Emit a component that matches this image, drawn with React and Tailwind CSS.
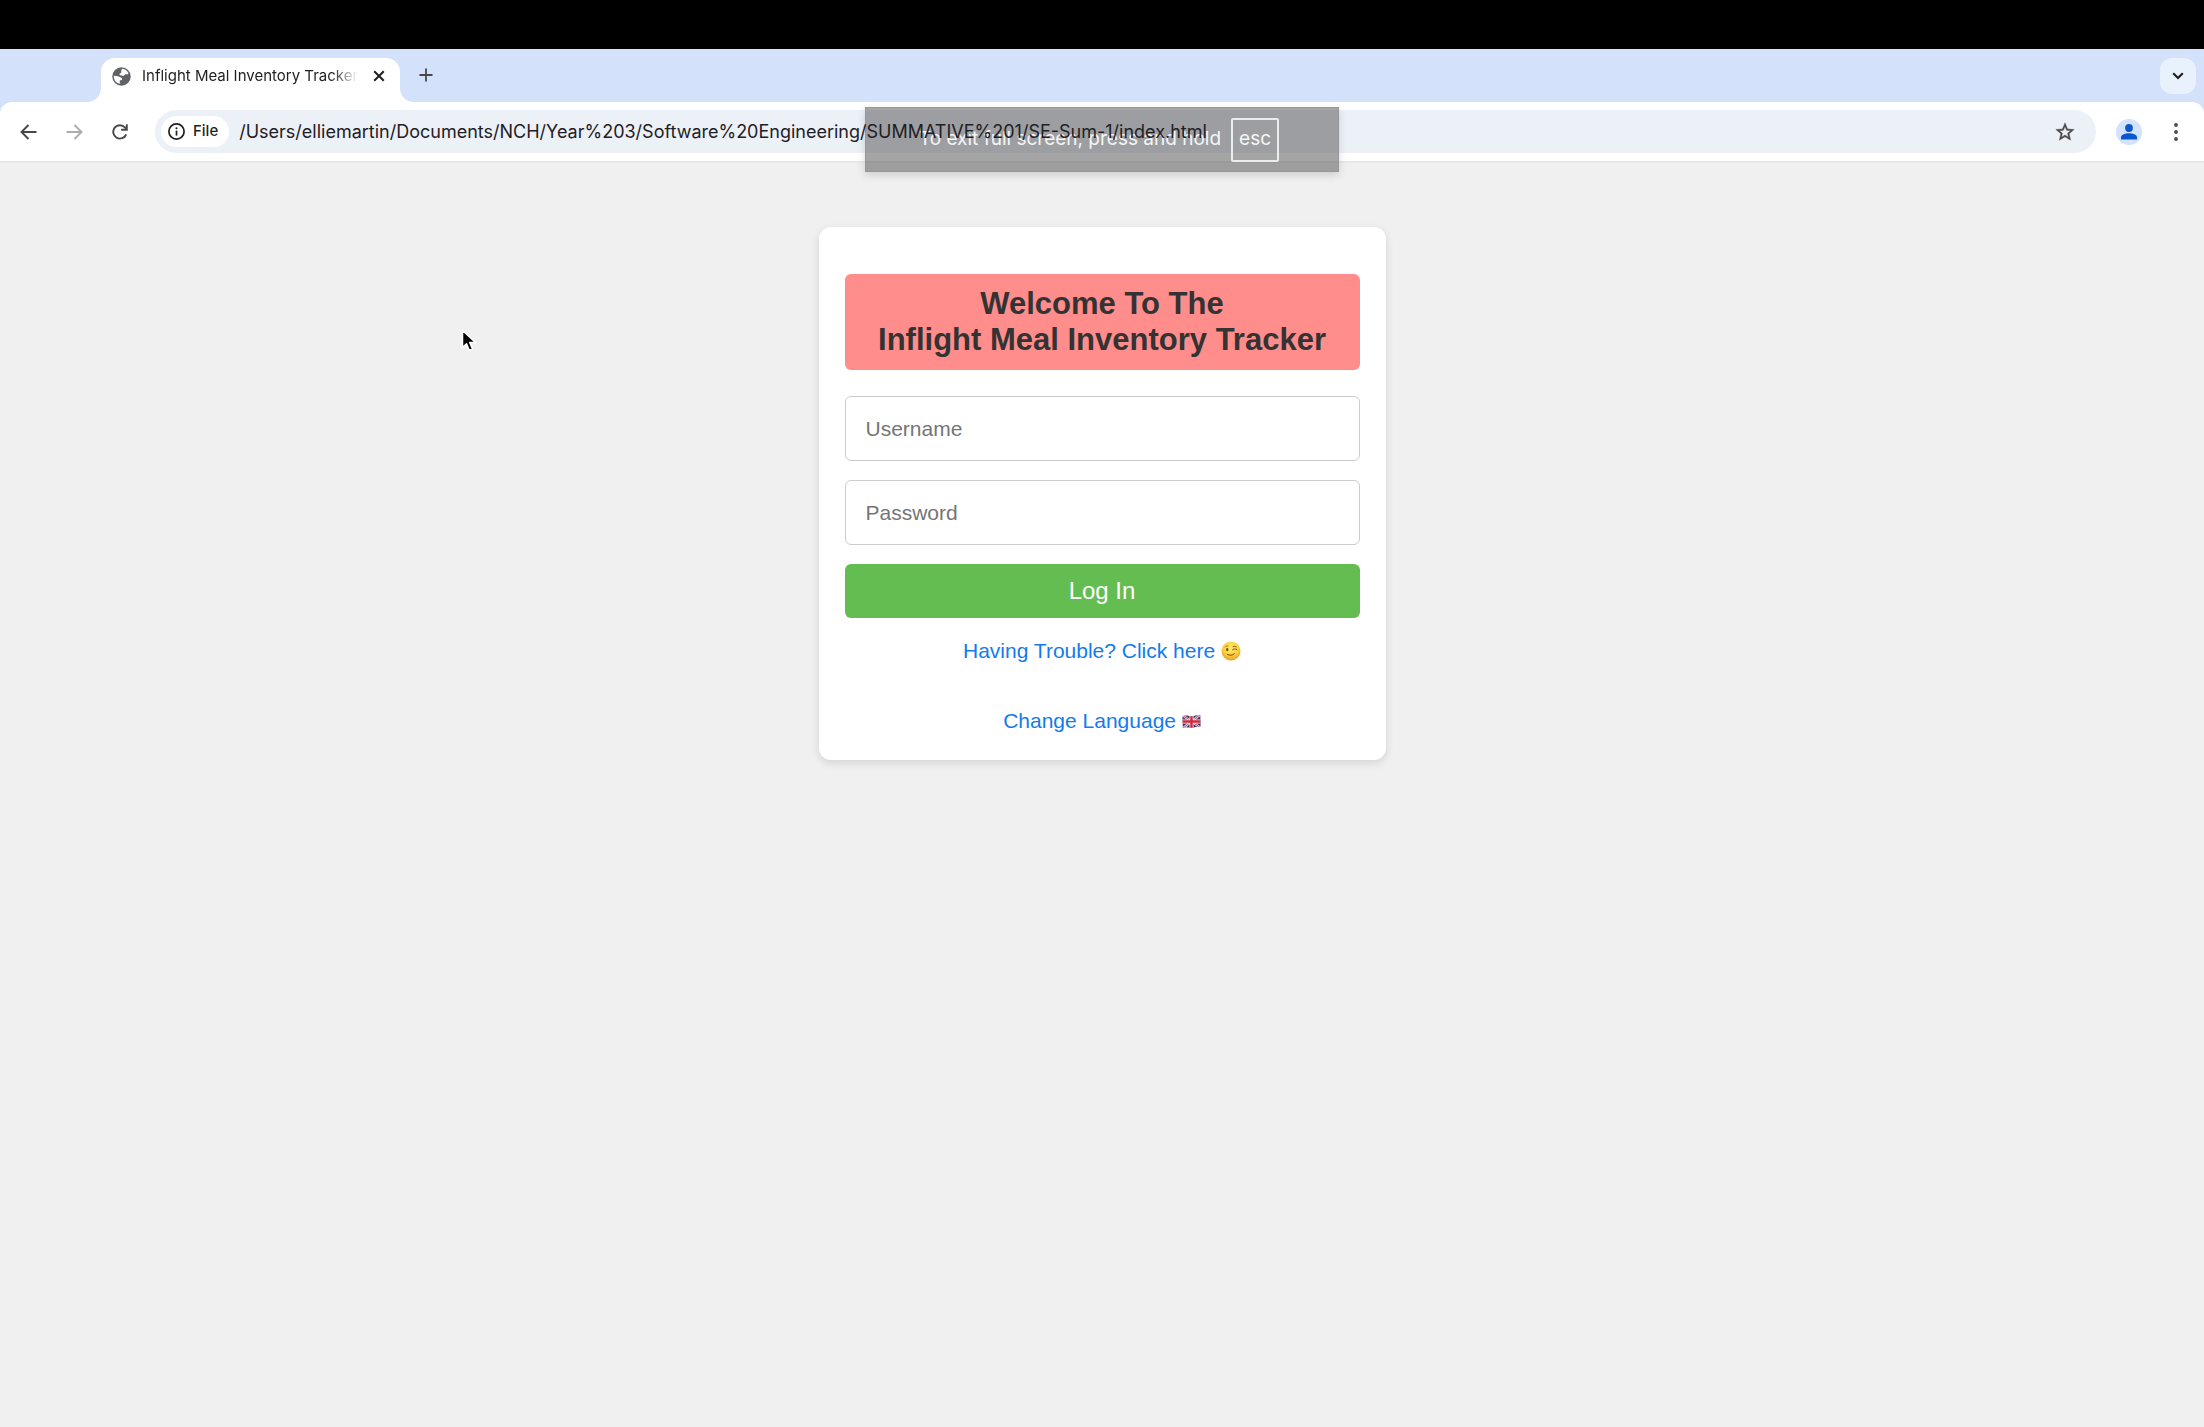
import React from "react";

const ICON = "block shrink-0";

function Globe() {
  return (
    <svg className={ICON} width="19" height="19" viewBox="0 0 20 20">
      <circle cx="10" cy="10" r="9.7" fill="#5f6368" />
      <path
        d="M10.800 1.900c3.200.3 5.600 2.300 6.700 5.100-1 .4-1.800.9-2.900.7-1.200-.2-1.300 1.300-2.500 1.500-1.600.2-2.500-.9-3.900-.5-.6-.9-.2-1.700.7-2 .9-.3.7-1 .8-1.700.1-.9.100-2.400 1.100-3.100z"
        fill="#fff"
      />
      <path
        d="M1.900 9.300c2.200.3 3.900.1 5.600.9 1.500.8 2.600.9 3.100 2.100.4 1.200-.8 1.600-1.900 1.700-.8.1-.6 1.300-.6 2.100 0 .6.300 1.100.9 1.700C4.700 17.500 1.700 14.200 1.900 9.300z"
        fill="#fff"
      />
    </svg>
  );
}

function Wink() {
  return (
    <svg className="inline-block align-[-3px]" width="20" height="20" viewBox="0 0 20 20" role="img" aria-label="winking face">
      <defs>
        <radialGradient id="wink" cx="50%" cy="35%" r="65%">
          <stop offset="0" stopColor="#ffec6b" />
          <stop offset="0.6" stopColor="#fcd040" />
          <stop offset="1" stopColor="#e89f26" />
        </radialGradient>
      </defs>
      <circle cx="10" cy="10" r="9.5" fill="url(#wink)" />
      <ellipse cx="6.300" cy="8.600" rx="1.100" ry="1.600" fill="#6b3e0c" />
      <path d="M4.200 6c.7-.9 1.800-1.300 2.900-1" stroke="#8a5513" strokeWidth="0.800" fill="none" strokeLinecap="round" />
      <path d="M11.500 8.800c1.200-1 2.800-1.100 4.300-.3M12 5.700c1-.6 2.200-.5 3.200.1" stroke="#7a480f" strokeWidth="1" fill="none" strokeLinecap="round" />
      <path d="M6.300 13.300c2.200 1.500 5 1.300 7-.6" stroke="#7a480f" strokeWidth="1" fill="none" strokeLinecap="round" />
    </svg>
  );
}

function UnionFlag() {
  return (
    <svg className="inline-block align-[-1px]" width="19" height="15" viewBox="0 0 19 15" role="img" aria-label="United Kingdom">
      <defs>
        <clipPath id="flag">
          <path d="M.5 2.300C4 .6 6.500 2.600 9.500 2.200 13 1.800 15 .6 18.300 1l.3 11.500c-3.300-.4-5.500.9-8.800 1.200-3.500.3-5.500-1.100-9 .3z" />
        </clipPath>
      </defs>
      <g clipPath="url(#flag)">
        <rect width="19" height="15" fill="#2f3a73" />
        <path d="M0 1l19 13M19 0L0 15" stroke="#f2f0f2" strokeWidth="2.200" />
        <path d="M0 1l19 13M19 0L0 15" stroke="#cf3350" strokeWidth="1" />
        <path d="M9.500 0v15M0 7.500h19" stroke="#f2f0f2" strokeWidth="4" />
        <path d="M9.500 0v15M0 7.500h19" stroke="#cf2740" strokeWidth="2.400" />
      </g>
    </svg>
  );
}

function TabStrip() {
  return (
    <div className="flex h-[53px] items-end bg-[#d3e1fb] pl-[101px] pr-2">
      <div className="relative flex h-11 w-[299px] items-center rounded-t-[14px] bg-white pb-2 pl-[11px] pr-[7px]">
        <svg className="absolute bottom-0 -left-3.5" width="14" height="14" viewBox="0 0 14 14">
          <path d="M14 0v14H0C8 14 14 8 14 0z" fill="#fff" />
        </svg>
        <svg className="absolute bottom-0 -right-3.5" width="14" height="14" viewBox="0 0 14 14">
          <path d="M0 0v14h14C6 14 0 8 0 0z" fill="#fff" />
        </svg>
        <Globe />
        <span className="ml-[11px] h-6 w-[216px] overflow-hidden whitespace-nowrap text-[15px] leading-6 text-[#1f1f1f] [mask-image:linear-gradient(to_right,#000_88%,transparent)]">
          Inflight Meal Inventory Tracker
        </span>
        <button aria-label="Close tab" className="ml-auto flex size-7 items-center justify-center">
          <svg className={ICON} width="12" height="12" viewBox="0 0 12 12">
            <path d="M1.200 1.200l9.600 9.600M10.800 1.200l-9.600 9.600" stroke="#1f1f1f" strokeWidth="2" />
          </svg>
        </button>
      </div>
      <button aria-label="New tab" className="mb-[13px] ml-3 flex size-7 items-center justify-center">
        <svg className={ICON} width="14" height="14" viewBox="0 0 14 14">
          <path d="M7 .5v13M.5 7h13" stroke="#474747" strokeWidth="1.800" />
        </svg>
      </button>
      <button aria-label="Search tabs" className="mb-2 ml-auto flex size-9 items-center justify-center rounded-xl bg-[#e9f1fd]">
        <svg className={ICON} width="12" height="8" viewBox="0 0 12 8">
          <path d="M1.200 1.300L6 6l4.800-4.700" stroke="#1f1f1f" strokeWidth="2.200" fill="none" />
        </svg>
      </button>
    </div>
  );
}

function Toolbar() {
  return (
    <div className="bg-[#d3e1fb]">
      <div className="flex h-[61px] items-center rounded-t-[12px] border-b-2 border-[#e6e7e9] bg-white pl-3.5 pr-3.5">
        <button aria-label="Back" className="flex size-7 items-center justify-center">
          <svg className={ICON} width="17" height="16" viewBox="0 0 17 16">
            <path d="M16.500 8H1.800M8.500 1L1.500 8l7 7" stroke="#474747" strokeWidth="1.900" fill="none" />
          </svg>
        </button>
        <button aria-label="Forward" className="ml-[18px] flex size-7 items-center justify-center">
          <svg className={ICON} width="17" height="16" viewBox="0 0 17 16">
            <path d="M.5 8h14.700M8.500 1l7 7-7 7" stroke="#acacac" strokeWidth="1.900" fill="none" />
          </svg>
        </button>
        <button aria-label="Reload" className="ml-[18px] flex size-7 items-center justify-center">
          <svg className={ICON} width="16" height="16" viewBox="0 0 16 16">
            <path d="M14.200 10.300A6.700 6.700 0 1 1 12.900 3.400l1.600 1.700" stroke="#474747" strokeWidth="1.900" fill="none" />
            <path d="M14.800.3v5.500H9.200" stroke="#474747" strokeWidth="1.900" fill="none" />
          </svg>
        </button>
        <div className="ml-[21px] flex h-[43px] grow items-center rounded-full bg-[#ecf0f7] pl-1.5 pr-5">
          <button className="flex h-[31px] items-center gap-2 rounded-full bg-white pl-[7px] pr-[11px] text-[15px] font-medium text-[#1f1f1f]">
            <svg className={ICON} width="17" height="17" viewBox="0 0 17 17">
              <circle cx="8.500" cy="8.500" r="7.600" stroke="#1f1f1f" strokeWidth="1.700" fill="none" />
              <path d="M8.500 7.600v5" stroke="#1f1f1f" strokeWidth="1.700" />
              <circle cx="8.500" cy="5.200" r="1.050" fill="#1f1f1f" />
            </svg>
            File
          </button>
          <input
            aria-label="Address"
            className="relative z-10 ml-2.5 h-8 min-w-0 grow bg-transparent text-lg text-[#1f2024] outline-none"
            defaultValue="/Users/elliemartin/Documents/NCH/Year%203/Software%20Engineering/SUMMATIVE%201/SE-Sum-1/index.html"
          />
          <button aria-label="Bookmark this page">
            <svg className={ICON} width="22" height="22" viewBox="0 0 24 24">
              <path
                d="M22 9.240l-7.190-.62L12 2 9.190 8.630 2 9.240l5.460 4.730L5.820 21 12 17.270 18.180 21l-1.630-7.030L22 9.240zM12 15.400l-3.760 2.270 1-4.280-3.320-2.880 4.380-.38L12 6.100l1.710 4.040 4.380.38-3.320 2.880 1 4.280L12 15.400z"
                fill="#474747"
                stroke="#474747"
                strokeWidth="0.400"
              />
            </svg>
          </button>
        </div>
        <button aria-label="Profile" className="ml-5 flex size-[26px] items-center justify-center rounded-full bg-[#d3e3fd]">
          <svg className={ICON} width="16" height="16" viewBox="0 0 16 16">
            <circle cx="8" cy="4" r="3.900" fill="#0b57d0" />
            <path d="M0 15.500v-2.200C0 10.600 4.500 9.300 8 9.300s8 1.300 8 4v2.200z" fill="#0b57d0" />
          </svg>
        </button>
        <button aria-label="Menu" className="ml-5 flex size-7 items-center justify-center">
          <svg className={ICON} width="4" height="18" viewBox="0 0 4 18">
            <circle cx="2" cy="2" r="1.900" fill="#474747" />
            <circle cx="2" cy="9" r="1.900" fill="#474747" />
            <circle cx="2" cy="16" r="1.900" fill="#474747" />
          </svg>
        </button>
      </div>
    </div>
  );
}

function LoginCard() {
  const field =
    "block h-[65px] w-full rounded-[6px] border border-[#cccccc] bg-white px-5 text-[21px] text-[#333333] outline-none placeholder:text-[#757575]";
  return (
    <form
      className="mx-auto mt-16 w-[567px] rounded-[12px] bg-white px-[26px] pt-[47px] pb-[27px] text-center font-['Liberation_Sans',Arial,sans-serif] shadow-[0_3px_8px_rgba(0,0,0,0.12)]"
      onSubmit={(e) => e.preventDefault()}
    >
      <h1 className="mb-[26px] rounded-[6px] bg-[#ff8d8b] py-3 text-[31px] leading-9 font-bold text-[#333333]">
        Welcome To The
        <br />
        Inflight Meal Inventory Tracker
      </h1>
      <input aria-label="Username" placeholder="Username" className={field} />
      <input aria-label="Password" type="password" placeholder="Password" className={field + " mt-[19px]"} />
      <button className="mt-[19px] block h-[54px] w-full rounded-[6px] bg-[#64bd50] text-2xl text-white">Log In</button>
      <p className="mt-[21px] text-[21px] leading-6">
        <a href="#help" className="text-[#137bec]">
          Having Trouble? Click here <Wink />
        </a>
      </p>
      <p className="mt-[46px] text-[21px] leading-6">
        <a href="#language" className="text-[#137bec]">
          Change Language <UnionFlag />
        </a>
      </p>
    </form>
  );
}

export default function App() {
  return (
    <div className="relative flex min-h-screen flex-col bg-[#f0f0f0] font-[Inter,sans-serif]">
      <div className="h-[49px] bg-black" />
      <TabStrip />
      <Toolbar />
      <main>
        <LoginCard />
      </main>
      <div className="absolute top-[107px] left-1/2 flex h-[65px] w-[474px] -translate-x-1/2 items-center justify-center gap-2.5 border border-[#96979b] bg-[#4b4b4b]/50 pr-1.5 text-[19px] text-white/90 shadow-[0_3px_8px_rgba(0,0,0,0.15)]">
        <span>To exit full screen, press and hold</span>
        <kbd className="flex h-11 w-12 items-center justify-center rounded-[2px] border-2 border-white/80 font-[Inter,sans-serif]">esc</kbd>
      </div>
      <svg className="absolute top-[329px] left-[461px]" width="16" height="24" viewBox="0 0 16 24" aria-hidden="true">
        <path d="M1.500 1.500v17l4-3.800 2.700 6.600 3.300-1.400-2.800-6.400h5.800z" fill="#000" stroke="#fff" strokeWidth="1.500" strokeLinejoin="round" />
      </svg>
    </div>
  );
}
